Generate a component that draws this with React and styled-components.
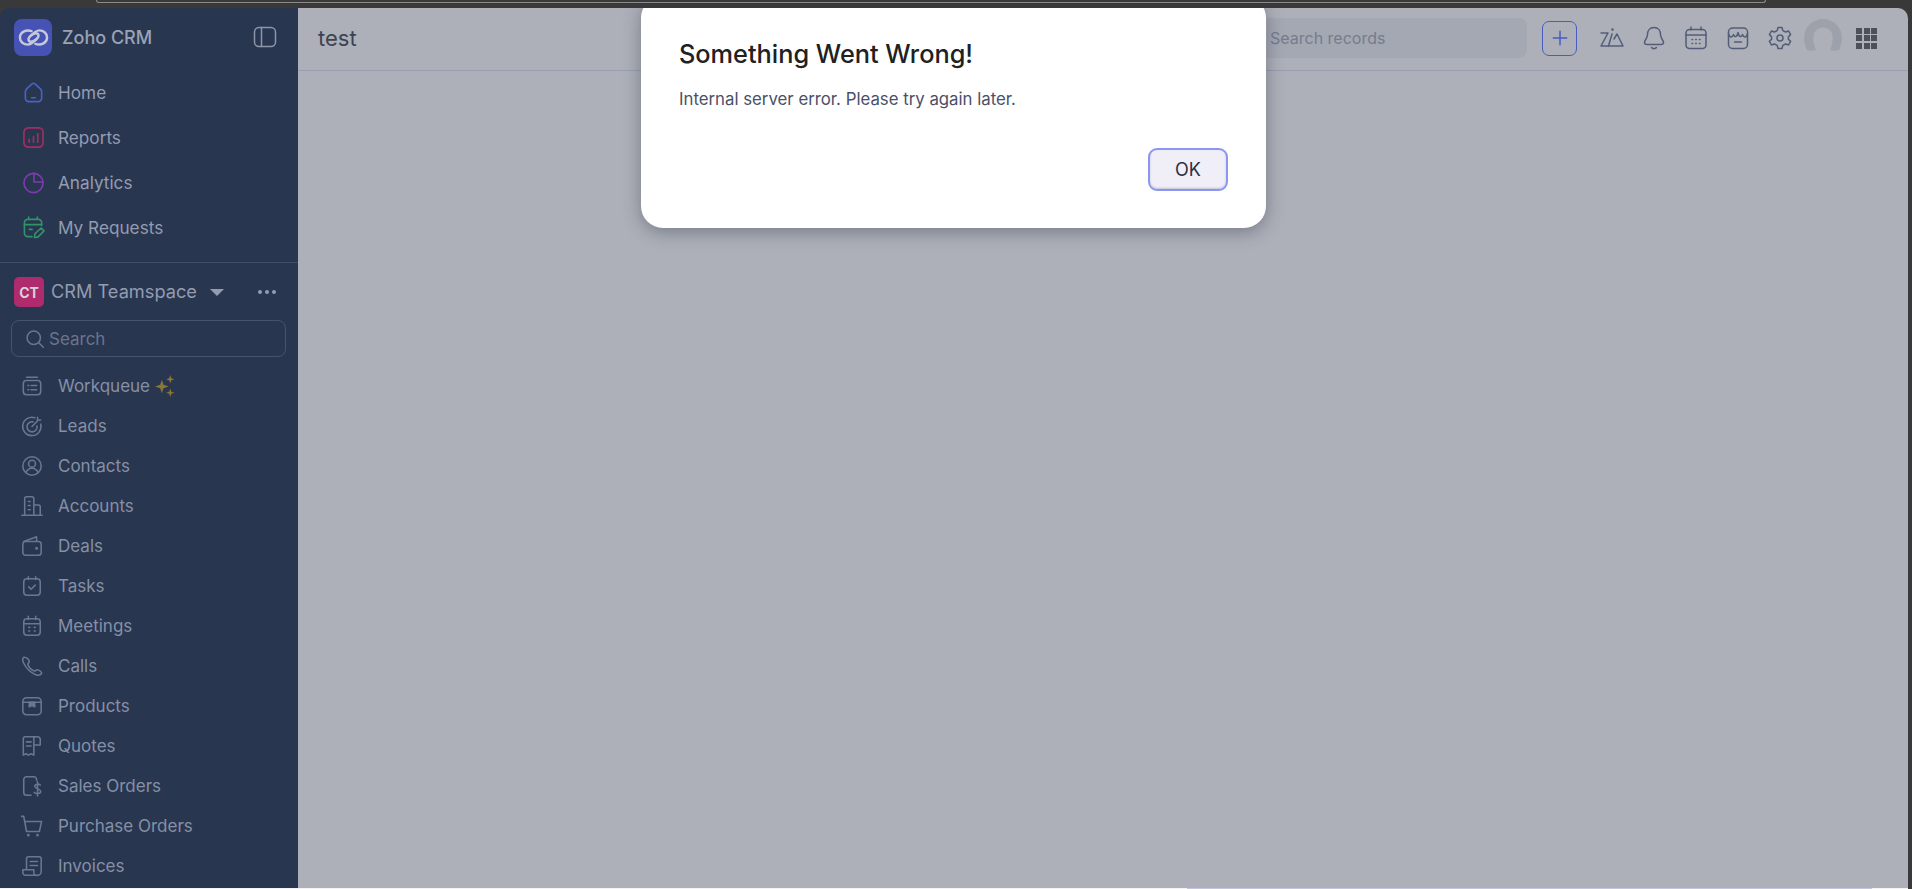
import React from "react";
import styled, { createGlobalStyle } from "styled-components";

const GlobalStyle = createGlobalStyle`
  html, body {
    margin: 0;
    padding: 0;
    height: 100%;
    overflow: hidden;
    background: #393939;
    font-family: Inter, "Liberation Sans", sans-serif;
  }
  * { box-sizing: border-box; }
`;

const Svg = ({ children, size = 24, color = "currentColor", sw = 1.6, view = 24, ...rest }) => (
  <IconSvg width={size} height={size} viewBox={`0 0 ${view} ${view}`} $color={color} strokeWidth={sw} {...rest}>
    {children}
  </IconSvg>
);

const ZohoLogo = () => (
  <Svg size={31} color="#c5c8d6" sw={1.9}>
    <path d="M10.5 7 C6 5.5 1.5 8 1.5 12 C1.5 15.5 4.5 17.5 7.5 17.5 C10 17.5 12 15.5 14.5 13 C16 11.5 16.5 10 15 9 C13.5 8 12 9 10 10.5" />
    <path d="M13.5 17 C18 18.5 22.5 16 22.5 12 C22.5 8.5 19.5 6.5 16.5 6.5 C14 6.5 12 8.5 9.5 11 C8 12.5 7.5 14 9 15 C10.5 16 12 15 14 13.5" />
  </Svg>
);

const PanelIcon = () => (
  <Svg size={24} color="#8d96a8" sw={1.5}>
    <rect x="1.5" y="2.5" width="21" height="19" rx="4.5" />
    <path d="M8.5 2.5 V21.5" />
  </Svg>
);

const navIcons = {
  home: (
    <>
      <path d="M3.5 11 C3.5 9.8 4 9 5 8 L10.5 3 C11.4 2.2 12.6 2.2 13.5 3 L19 8 C20 9 20.5 9.8 20.5 11 V18 A3.5 3.5 0 0 1 17 21.5 H7 A3.5 3.5 0 0 1 3.5 18 Z" />
      <path d="M10 17.5 H14" />
    </>
  ),
  reports: (
    <>
      <rect x="2" y="2" width="20" height="20" rx="4.5" />
      <path d="M7.5 17 V14 M12 17 V11 M16.5 17 V8" />
    </>
  ),
  analytics: (
    <>
      <circle cx="12" cy="12.5" r="10" />
      <path d="M12.5 2.5 V11.5 H22" />
    </>
  ),
  requests: (
    <>
      <path d="M10.5 21.5 H6 A3.5 3.5 0 0 1 2.5 18 V7 A3.5 3.5 0 0 1 6 3.5 H17 A3.5 3.5 0 0 1 20.5 7 V10" />
      <path d="M2.5 9 H20.5 M7 1 V3.5 M16 1 V3.5 M7.5 14 H10.5" />
      <path d="M13 22.5 L13.5 18.5 L20 12.5 L23 15.5 L16.5 22 Z" />
    </>
  ),
  workqueue: (
    <>
      <path d="M6 2.5 H18" />
      <rect x="2.5" y="6" width="19" height="15.5" rx="3.5" />
      <path d="M7.5 11.5 H8.5 M11 11.5 H17 M7.5 16 H8.5 M11 16 H17" />
    </>
  ),
  leads: (
    <>
      <path d="M15 3 A10 10 0 1 0 21.5 10" />
      <path d="M13 7.5 A5.5 5.5 0 1 0 17.5 12" />
      <path d="M12 12.5 L19 5.5 M18 2.5 V5.5 H21.5" />
    </>
  ),
  contacts: (
    <>
      <circle cx="12" cy="12" r="10" />
      <circle cx="12" cy="9.5" r="3.8" />
      <path d="M5.5 19 C7 15.5 9.5 14.5 12 14.5 C14.5 14.5 17 15.5 18.5 19" />
    </>
  ),
  accounts: (
    <>
      <path d="M4 22 V4 A2 2 0 0 1 6 2 H12 A2 2 0 0 1 14 4 V22" />
      <path d="M14 11 H19 A2 2 0 0 1 21 13 V22 M1 22 H23 M8 7 H10 M8 11.5 H10 M8 16 H10" />
    </>
  ),
  deals: (
    <>
      <rect x="2" y="7" width="20" height="15" rx="3" />
      <path d="M3 7 L17 2 V7" />
      <circle cx="17" cy="14.5" r="0.8" />
    </>
  ),
  tasks: (
    <>
      <rect x="3" y="4" width="18" height="18" rx="3.5" />
      <path d="M8 2 V5 M16 2 V5 M8.5 13 L11 15.5 L15.5 11" />
    </>
  ),
  meetings: (
    <>
      <rect x="3" y="4" width="18" height="18" rx="3.5" />
      <path d="M3 9.5 H21 M8 1.5 V5 M16 1.5 V5 M8.5 13.5 H9.5 M14.5 13.5 H15.5 M8.5 17.5 H9.5 M14.5 17.5 H15.5" />
    </>
  ),
  calls: (
    <path d="M3 2.5 C1.5 3.5 1.5 6 3 9 C6 15 10 19 16 21.5 C19 22.5 21.5 22 22.5 20 C22.5 18.5 19.5 16 18 16 C16.5 16 16 17.5 14.5 17.5 C12 16.5 8.5 13 7.5 10.5 C7.5 9 9 8.5 9 7 C9 5.5 6 2 3 2.5 Z" />
  ),
  products: (
    <>
      <rect x="2" y="3" width="20" height="18.5" rx="4" />
      <path d="M2 8 H22" />
      <path d="M9 8 V13 L12 11.5 L15 13 V8 Z" fill="currentColor" />
    </>
  ),
  quotes: (
    <>
      <path d="M17 2 H4.5 A2 2 0 0 0 2.5 4 V22 L5.5 20.5 L8 22 L11 20.5 L14 22 V4 A2 2 0 0 1 16 2 H18 A3 3 0 0 1 21 5 V11 H14" />
      <path d="M6 7.5 H11 M6 12 H11" />
    </>
  ),
  sales: (
    <>
      <path d="M17 6 V5 A3 3 0 0 0 14 2 H6 A3 3 0 0 0 3 5 V19 A3 3 0 0 0 6 22 H11" />
      <path d="M21 11 C20 9.5 15.5 9.5 15 12 C14.5 15 21.5 15 21.5 18 C21.5 20.5 16 21 14.5 19 M18 7.5 V23" />
    </>
  ),
  cart: (
    <>
      <path d="M0.5 1.5 H3 L6 18 H20 L22.5 7 H4" />
      <circle cx="8" cy="22" r="0.7" />
      <circle cx="18" cy="22" r="0.7" />
    </>
  ),
  invoices: (
    <>
      <path d="M6 16 V4 A2 2 0 0 1 8 2 H20 A2 2 0 0 1 22 4 V18 A4 4 0 0 1 18 22 H5 A3 3 0 0 1 2 19 V16 H14 V19 A3 3 0 0 0 18 22" />
      <path d="M10 7 H18 M10 11.5 H18" />
    </>
  ),
};

const NavIcon = ({ name, color, size = 22 }) => (
  <IconSlot>
    <Svg size={size} color={color} sw={1.7}>{navIcons[name]}</Svg>
  </IconSlot>
);

const Sparkles = () => (
  <SparkSvg width="22" height="22" viewBox="0 0 20 21" fill="#8a7636">
    <path d="M7 4.5 L8.6 9.4 L13.5 11 L8.6 12.6 L7 17.5 L5.4 12.6 L0.5 11 L5.4 9.4 Z" />
    <path d="M15 0 L16 3 L19 4 L16 5 L15 8 L14 5 L11 4 L14 3 Z" />
    <path d="M15 13 L16 16 L19 17 L16 18 L15 21 L14 18 L11 17 L14 16 Z" />
  </SparkSvg>
);

const ModuleRow = ({ icon, label, children }) => (
  <Module>
    <NavIcon name={icon} color="#6b7690" />
    <ModuleLabel>{label}</ModuleLabel>
    {children}
  </Module>
);

const App = () => {
  const primary = [
    { icon: "home", label: "Home", color: "#4a62c4" },
    { icon: "reports", label: "Reports", color: "#a62d63" },
    { icon: "analytics", label: "Analytics", color: "#7d3bb0" },
    { icon: "requests", label: "My Requests", color: "#2f9468" },
  ];
  const modules = [
    ["leads", "Leads"],
    ["contacts", "Contacts"],
    ["accounts", "Accounts"],
    ["deals", "Deals"],
    ["tasks", "Tasks"],
    ["meetings", "Meetings"],
    ["calls", "Calls"],
    ["products", "Products"],
    ["quotes", "Quotes"],
    ["sales", "Sales Orders"],
    ["cart", "Purchase Orders"],
    ["invoices", "Invoices"],
  ];

  return (
    <Page>
      <GlobalStyle />
      <BrowserStrip>
        <AddressEdge />
      </BrowserStrip>
      <Shell>
        <Sidebar>
          <BrandRow>
            <LogoTile>
              <ZohoLogo />
            </LogoTile>
            <BrandName>Zoho CRM</BrandName>
            <PanelToggle>
              <PanelIcon />
            </PanelToggle>
          </BrandRow>
          <PrimaryNav>
            {primary.map((item) => (
              <PrimaryItem key={item.label}>
                <NavIcon name={item.icon} color={item.color} size={23} />
                <PrimaryLabel>{item.label}</PrimaryLabel>
              </PrimaryItem>
            ))}
          </PrimaryNav>
          <Divider />
          <TeamRow>
            <TeamBadge>CT</TeamBadge>
            <TeamName>CRM Teamspace</TeamName>
            <Caret />
            <MoreDots>
              <i />
              <i />
              <i />
            </MoreDots>
          </TeamRow>
          <SideSearch>
            <Svg size={20} color="#6b7690" sw={1.8}>
              <circle cx="10.5" cy="10.5" r="8" />
              <path d="M16.5 16.5 L22 22" />
            </Svg>
            <SideSearchText>Search</SideSearchText>
          </SideSearch>
          <ModuleList>
            <ModuleRow icon="workqueue" label="Workqueue">
              <Sparkles />
            </ModuleRow>
            {modules.map(([icon, label]) => (
              <ModuleRow key={label} icon={icon} label={label} />
            ))}
          </ModuleList>
        </Sidebar>
        <Main>
          <TopBar>
            <PageTitle>test</PageTitle>
            <RecordSearch>Search records</RecordSearch>
            <AddButton>
              <Svg size={20} color="#4a5cc0" sw={1.8}>
                <path d="M12 4 V20 M4 12 H20" />
              </Svg>
            </AddButton>
            <ToolIcons>
              <ToolIcon>
                <Svg size={24} color="#535d78" sw={1.5}>
                  <path d="M1 7 H8 L1 20 H23 L17 8 L14 13" />
                  <path d="M12 8 L8.5 20" />
                  <circle cx="12.5" cy="3.5" r="0.6" />
                </Svg>
              </ToolIcon>
              <ToolIcon>
                <Svg size={24} color="#535d78" sw={1.5}>
                  <path d="M12 1.5 C7.5 1.5 5.5 5 5.5 8.5 C5.5 12.5 2.5 14 2.5 16.5 C2.5 18 3.5 18.5 5 18.5 H19 C20.5 18.5 21.5 18 21.5 16.5 C21.5 14 18.5 12.5 18.5 8.5 C18.5 5 16.5 1.5 12 1.5 Z" />
                  <path d="M9.5 21.5 C10.5 23 13.5 23 14.5 21.5" />
                </Svg>
              </ToolIcon>
              <ToolIcon>
                <Svg size={24} color="#535d78" sw={1.5}>
                  <rect x="2" y="3.5" width="20" height="19" rx="3.5" />
                  <path d="M2 9 H22 M7 1 V4 M17 1 V4" />
                  <path d="M8 13.5 H8.6 M11.7 13.5 H12.3 M15.4 13.5 H16 M8 17.5 H8.6 M11.7 17.5 H12.3 M15.4 17.5 H16" />
                </Svg>
              </ToolIcon>
              <ToolIcon>
                <Svg size={24} color="#535d78" sw={1.5}>
                  <rect x="2.5" y="2" width="19" height="20.5" rx="4" />
                  <path d="M2.5 8 C3.5 12 6.5 11.5 7.5 8.5 C8.5 11.5 11 11.5 12 6.5 C13 11.5 15.5 11.5 16.5 8.5 C17.5 11.5 20.5 12 21.5 8" />
                  <path d="M8.5 16 H15.5" />
                </Svg>
              </ToolIcon>
              <ToolIcon>
                <Svg size={24} color="#535d78" sw={1.5}>
                  <circle cx="12" cy="12" r="3" />
                  <path d="M10 1.5 H14 L14.8 4.6 L17.6 6 L20.6 5 L22.6 8.6 L20.4 10.8 V13.2 L22.6 15.4 L20.6 19 L17.6 18 L14.8 19.4 L14 22.5 H10 L9.2 19.4 L6.4 18 L3.4 19 L1.4 15.4 L3.6 13.2 V10.8 L1.4 8.6 L3.4 5 L6.4 6 L9.2 4.6 Z" />
                </Svg>
              </ToolIcon>
            </ToolIcons>
            <Avatar>
              <svg width="38" height="32" viewBox="0 0 38 32">
                <path d="M0 19 A19 19 0 0 1 38 19 C38 24 36.5 28 35 31 C32 32 29 32 26 31 C28 26 29 22 28.5 17 C28 12 24 8.5 19 8.5 C14 8.5 10 12 9.5 17 C9 22 10 26 12 31 C9 32 6 32 3 31 C1.5 28 0 24 0 19 Z" fill="#9ca1ac" />
              </svg>
            </Avatar>
            <AppGrid>
              {Array.from({ length: 9 }).map((_, i) => (
                <i key={i} />
              ))}
            </AppGrid>
          </TopBar>
        </Main>
        <Dialog>
          <DialogTitle>Something Went Wrong!</DialogTitle>
          <DialogText>Internal server error. Please try again later.</DialogText>
          <DialogActions>
            <OkButton>OK</OkButton>
          </DialogActions>
        </Dialog>
      </Shell>
      <BottomEdge>
        <BottomGlow />
      </BottomEdge>
    </Page>
  );
};

const Page = styled.div`
  width: 1912px;
  height: 889px;
  display: flex;
  flex-direction: column;
  overflow: hidden;
  background: #393939;
`;

const BrowserStrip = styled.div`
  height: 8px;
  flex: none;
  background: #393939;
  padding: 0 146px 0 96px;
`;

const AddressEdge = styled.div`
  height: 3px;
  border: 1px solid #8a8a8a;
  border-top: none;
  border-radius: 0 0 6px 6px;
`;

const Shell = styled.div`
  position: relative;
  flex: 1;
  min-height: 0;
  display: flex;
  margin-right: 4px;
  border-radius: 10px 10px 0 0;
  overflow: hidden;
`;

const Sidebar = styled.aside`
  width: 298px;
  flex: none;
  display: flex;
  flex-direction: column;
  overflow: hidden;
  background: #293650;
`;

const BrandRow = styled.div`
  height: 60px;
  flex: none;
  display: flex;
  align-items: center;
  padding: 0 21px 2px 14px;
`;

const LogoTile = styled.div`
  width: 38px;
  height: 37px;
  display: flex;
  align-items: center;
  justify-content: center;
  border-radius: 8px;
  background: #4653b5;
`;

const BrandName = styled.span`
  flex: 1;
  margin-left: 10px;
  font-size: 18px;
  font-weight: 500;
  color: #9aa3b5;
`;

const PanelToggle = styled.div`
  display: flex;
`;

const PrimaryNav = styled.nav`
  padding-top: 2px;
`;

const PrimaryItem = styled.div`
  height: 45px;
  display: flex;
  align-items: center;
  padding-left: 22px;
`;

const IconSlot = styled.span`
  width: 36px;
  flex: none;
  display: flex;
`;

const IconSvg = styled.svg`
  flex: none;
  fill: none;
  stroke: ${(props) => props.$color};
  color: ${(props) => props.$color};
  stroke-linecap: round;
  stroke-linejoin: round;
`;

const SparkSvg = styled.svg`
  flex: none;
  margin-left: 4px;
`;

const PrimaryLabel = styled.span`
  font-size: 17.2px;
  color: #939cb0;
`;

const Divider = styled.div`
  height: 1px;
  flex: none;
  margin-top: 12px;
  background: #404d68;
`;

const TeamRow = styled.div`
  height: 30px;
  flex: none;
  display: flex;
  align-items: center;
  margin-top: 14px;
  padding: 0 22px 0 14px;
`;

const TeamBadge = styled.div`
  width: 30px;
  height: 30px;
  display: flex;
  align-items: center;
  justify-content: center;
  border-radius: 5px;
  background: #b02a6e;
  color: #d8d2da;
  font-size: 14px;
  font-weight: 700;
`;

const TeamName = styled.span`
  margin: -2px 0 0 7px;
  font-size: 18.2px;
  color: #939cb0;
`;

const Caret = styled.span`
  width: 0;
  height: 0;
  margin-left: 13px;
  border-left: 7px solid transparent;
  border-right: 7px solid transparent;
  border-top: 7px solid #939cb0;
`;

const MoreDots = styled.div`
  margin-left: auto;
  display: flex;
  gap: 3px;

  i {
    width: 4px;
    height: 4px;
    border-radius: 50%;
    background: #939cb0;
  }
`;

const SideSearch = styled.div`
  height: 37px;
  flex: none;
  display: flex;
  align-items: center;
  gap: 4px;
  margin: 13px 12px 0 11px;
  padding-left: 13px;
  border: 1px solid #46536d;
  border-radius: 8px;
`;

const SideSearchText = styled.span`
  font-size: 17px;
  color: #69748c;
`;

const ModuleList = styled.div`
  padding-top: 9px;
`;

const Module = styled.div`
  height: 40px;
  display: flex;
  align-items: center;
  padding-left: 21px;
`;

const ModuleLabel = styled.span`
  margin-left: 1px;
  font-size: 17px;
  color: #8590a6;
`;

const Main = styled.main`
  flex: 1;
  min-width: 0;
  background: #adb0b9;
`;

const TopBar = styled.header`
  height: 63px;
  display: flex;
  align-items: center;
  padding: 0 31px 2px 20px;
  border-bottom: 1px solid #9a9eb0;
`;

const PageTitle = styled.h1`
  flex: 1;
  margin: 0;
  font-size: 22px;
  font-weight: 400;
  color: #3c4354;
`;

const RecordSearch = styled.div`
  width: 260px;
  height: 40px;
  display: flex;
  align-items: center;
  padding-left: 3px;
  border-radius: 0 8px 8px 0;
  background: #a4a8b3;
  color: #767c8e;
  font-size: 16px;
`;

const AddButton = styled.div`
  width: 35px;
  height: 35px;
  display: flex;
  align-items: center;
  justify-content: center;
  margin-left: 15px;
  border: 1px solid #4a5cc0;
  border-radius: 7px;
`;

const ToolIcons = styled.div`
  display: flex;
  gap: 18px;
  margin-left: 23px;
`;

const ToolIcon = styled.span`
  width: 24px;
  display: flex;
`;

const Avatar = styled.div`
  height: 32px;
  display: flex;
  margin-left: 12px;
  align-self: flex-start;
  margin-top: 11px;
`;

const AppGrid = styled.div`
  display: grid;
  grid-template-columns: repeat(3, 6px);
  grid-auto-rows: 6px;
  gap: 1.5px;
  margin-left: 14px;

  i {
    background: #4d5056;
  }
`;

const Dialog = styled.div`
  position: absolute;
  top: -12px;
  left: 641px;
  width: 625px;
  height: 232px;
  padding: 43px 38px 0;
  border-radius: 22px;
  background: #fff;
  box-shadow: 0 4px 18px rgba(40, 44, 60, 0.4);
`;

const DialogTitle = styled.h2`
  margin: 0;
  font-size: 25.3px;
  line-height: 30px;
  font-weight: 500;
  color: #212121;
`;

const DialogText = styled.p`
  margin: 18px 0 0;
  font-size: 16.8px;
  line-height: 24px;
  color: #4a5068;
`;

const DialogActions = styled.div`
  display: flex;
  justify-content: flex-end;
  margin-top: 37px;
`;

const OkButton = styled.button`
  width: 80px;
  height: 43px;
  border: 2px solid #8b96f0;
  border-radius: 9px;
  background: #f0eff8;
  box-shadow: inset 0 -1px 2px rgba(90, 90, 130, 0.3);
  color: #2b3042;
  font-family: inherit;
  font-size: 18px;
`;

const BottomEdge = styled.div`
  height: 1px;
  flex: none;
  margin-right: 4px;
  padding-left: 1187px;
  padding-right: 36px;
  background: #f4f4f6;
`;

const BottomGlow = styled.div`
  height: 1px;
  background: #c4c4dc;
`;

export default App;
